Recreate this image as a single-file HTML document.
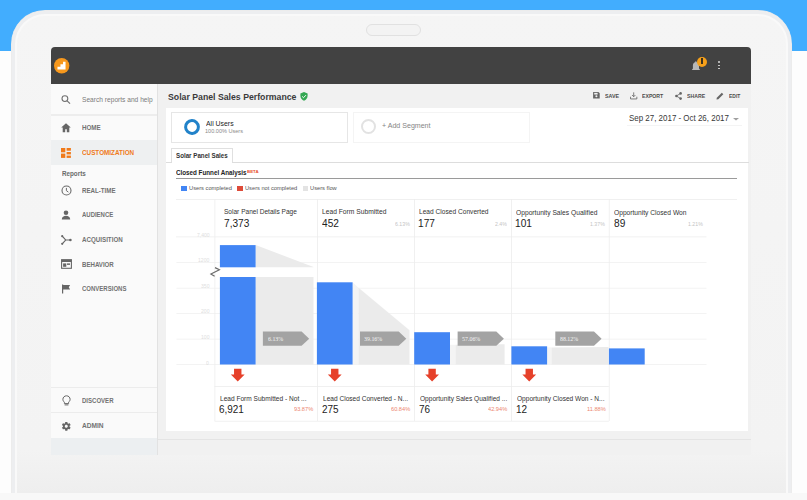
<!DOCTYPE html>
<html><head><meta charset="utf-8">
<style>
*{margin:0;padding:0;box-sizing:border-box}
html,body{width:807px;height:500px;overflow:hidden;background:#fdfdfd;font-family:"Liberation Sans",sans-serif}
.a{position:absolute;white-space:nowrap;line-height:1}
svg{position:absolute;overflow:visible}
</style></head><body>

<div class="a" style="left:0px;top:0px;width:807px;height:51.3px;background:#42adfe;"></div>
<div class="a" style="left:11px;top:10px;width:780.5px;height:500px;border-radius:34px 34px 0 0;background:linear-gradient(#f5f5f5 0%,#f3f3f3 88%,#eeeeee 96.6%);border:1px solid #ececec;border-bottom:none;box-shadow:inset 0 0 0 3px #edeef0,inset 0 0 0 5px #f9f9f9"></div>
<div class="a" style="left:366px;top:24px;width:55px;height:12px;border-radius:6px;border:1px solid #e1e1e1;background:#f3f3f3"></div>
<div class="a" style="left:51px;top:47px;width:700px;height:408px;background:#f1f1f1;border-radius:4px 4px 0 0"></div>
<div class="a" style="left:51px;top:47px;width:700px;height:36.5px;background:#424242;border-radius:4px 4px 0 0"></div>
<svg style="left:53.9px;top:58px" width="15.4" height="15.4" viewBox="0 0 16 16">
  <circle cx="8" cy="8" r="8" fill="#f7981d"/>
  <path d="M3.6 12h8.4V4h-2.6v2.6H6.7v2.6H3.6z" fill="#fff"/></svg>
<svg style="left:691px;top:59.5px" width="11" height="11" viewBox="0 0 11 11">
  <path d="M.8 10h8.4L8 8.6V5.4c0-1.9-1.1-3.2-2.7-3.5V1H4.5v.9C2.9 2.2 1.9 3.5 1.9 5.4v3.2z" fill="#b8b8b8"/></svg>
<div class="a" style="left:696.7px;top:56.5px;width:10px;height:10px;border-radius:5px;background:#f6a01a"></div>
<div class="a" style="left:701px;top:58.3px;width:1.6px;height:5.6px;background:#3d3220"></div>
<div class="a" style="left:718px;top:61.2px;width:1.7px;height:1.7px;border-radius:1px;background:#d8d8d8"></div>
<div class="a" style="left:718px;top:64.6px;width:1.7px;height:1.7px;border-radius:1px;background:#d8d8d8"></div>
<div class="a" style="left:718px;top:67.8px;width:1.7px;height:1.7px;border-radius:1px;background:#d8d8d8"></div>
<div class="a" style="left:51px;top:83.5px;width:105.5px;height:371.5px;background:#fafafa;"></div>
<div class="a" style="left:156.5px;top:83.5px;width:1px;height:371.5px;background:#e2e2e2;"></div>
<svg style="left:60.5px;top:94.6px" width="10" height="9" viewBox="0 0 10 9">
  <circle cx="3.9" cy="3.6" r="2.9" fill="none" stroke="#707070" stroke-width="1.1"/>
  <path d="M5.9 5.6L9 8.6" stroke="#707070" stroke-width="1.2"/></svg>
<div class="a tx" id="t_search" style="left:81.90px;top:95.97px;font-size:7.70px;color:#7a7a7a;font-weight:normal;font-family:'Liberation Sans',sans-serif;transform:scaleX(0.861);transform-origin:0 0;">Search reports and help</div>
<div class="a" style="left:51px;top:114px;width:105.5px;height:1.5px;background:#ededed;"></div>
<svg style="left:60.9px;top:123px" width="10" height="9.5" viewBox="0 0 10 9.5">
  <path d="M5 .3L.2 4.5h1.5v4.8h2.5V6.2h1.6v3.1h2.5V4.5h1.5z" fill="#666"/></svg>
<div class="a tx" id="t_home" style="left:82.16px;top:123.98px;font-size:6.98px;color:#727272;font-weight:bold;font-family:'Liberation Sans',sans-serif;transform:scaleX(0.895);transform-origin:0 0;">HOME</div>
<div class="a" style="left:51px;top:139.5px;width:105.5px;height:25px;background:#eef0f1;"></div>
<svg style="left:61px;top:147.5px" width="10" height="10" viewBox="0 0 10 10">
  <rect x="0" y="0" width="4.3" height="4.3" fill="#f07a1a"/>
  <rect x="5.6" y="0" width="4.3" height="2.7" fill="#f07a1a"/>
  <rect x="0" y="5.6" width="4.3" height="4.3" fill="#f07a1a"/>
  <rect x="5.6" y="4" width="4.3" height="2.4" fill="#f07a1a"/>
  <rect x="5.6" y="7.6" width="4.3" height="2.3" fill="#f07a1a"/></svg>
<div class="a tx" id="t_cust" style="left:81.65px;top:148.96px;font-size:6.98px;color:#f07a1a;font-weight:bold;font-family:'Liberation Sans',sans-serif;transform:scaleX(0.909);transform-origin:0 0;">CUSTOMIZATION</div>
<div class="a tx" id="t_reports" style="left:62.17px;top:171.00px;font-size:7.12px;color:#6a6a6a;font-weight:bold;font-family:'Liberation Sans',sans-serif;transform:scaleX(0.884);transform-origin:0 0;">Reports</div>
<svg style="left:60.5px;top:184.5px" width="11" height="11" viewBox="0 0 11 11">
  <circle cx="5.5" cy="5.5" r="4.5" fill="none" stroke="#6a6a6a" stroke-width="1.1"/>
  <path d="M5.4 2.9v2.8l2 1.4" fill="none" stroke="#6a6a6a" stroke-width="1"/></svg>
<div class="a tx" id="t_rt" style="left:81.60px;top:187.86px;font-size:7.12px;color:#727272;font-weight:bold;font-family:'Liberation Sans',sans-serif;transform:scaleX(0.868);transform-origin:0 0;">REAL-TIME</div>
<svg style="left:61px;top:210px" width="10" height="10" viewBox="0 0 10 10">
  <circle cx="5" cy="2.7" r="2.3" fill="#666"/>
  <path d="M.8 9.5c0-2.6 2-3.7 4.2-3.7s4.2 1.1 4.2 3.7z" fill="#666"/></svg>
<div class="a tx" id="t_aud" style="left:81.85px;top:212.26px;font-size:7.12px;color:#727272;font-weight:bold;font-family:'Liberation Sans',sans-serif;transform:scaleX(0.841);transform-origin:0 0;">AUDIENCE</div>
<svg style="left:60.5px;top:234.5px" width="11" height="10" viewBox="0 0 11 10">
  <path d="M1.2 1.2l3.6 3.8L1.2 8.8M4.8 5h4.6" fill="none" stroke="#666" stroke-width="1.1"/>
  <circle cx="1.2" cy="1.2" r="1.1" fill="#666"/><circle cx="1.2" cy="8.8" r="1.1" fill="#666"/><circle cx="9.4" cy="5" r="1.3" fill="#666"/></svg>
<div class="a tx" id="t_acq" style="left:81.84px;top:237.06px;font-size:7.12px;color:#727272;font-weight:bold;font-family:'Liberation Sans',sans-serif;transform:scaleX(0.873);transform-origin:0 0;">ACQUISITION</div>
<svg style="left:60.5px;top:259.2px" width="11" height="10" viewBox="0 0 11 10">
  <rect x=".6" y=".7" width="9.8" height="8.6" fill="none" stroke="#666" stroke-width="1.1"/>
  <rect x=".6" y=".7" width="9.8" height="2.3" fill="#666"/>
  <rect x="2.1" y="4.4" width="3.2" height="3.4" fill="#666"/>
  <rect x="6" y="4.4" width="3" height="1.5" fill="#666"/></svg>
<div class="a tx" id="t_beh" style="left:81.60px;top:261.56px;font-size:7.12px;color:#727272;font-weight:bold;font-family:'Liberation Sans',sans-serif;transform:scaleX(0.859);transform-origin:0 0;">BEHAVIOR</div>
<svg style="left:61px;top:283.5px" width="10" height="10" viewBox="0 0 10 10">
  <path d="M1 .4h1.2v9.2H1zM2.2 .9h6.9L7.8 3.2l1.3 2.4H2.2z" fill="#666"/></svg>
<div class="a tx" id="t_conv" style="left:81.76px;top:285.96px;font-size:7.12px;color:#727272;font-weight:bold;font-family:'Liberation Sans',sans-serif;transform:scaleX(0.845);transform-origin:0 0;">CONVERSIONS</div>
<div class="a" style="left:51px;top:387px;width:105.5px;height:1.2px;background:#ececec;"></div>
<svg style="left:61.5px;top:394.5px" width="9" height="11" viewBox="0 0 9 11">
  <path d="M4.5 .8C2.4.8.9 2.4.9 4.3c0 1.3.7 2.2 1.5 2.9V8.6h4.2V7.2c.8-.7 1.5-1.6 1.5-2.9C8.1 2.4 6.6.8 4.5.8z" fill="none" stroke="#666" stroke-width="1"/>
  <path d="M2.6 9.9h3.8" stroke="#666" stroke-width="1"/></svg>
<div class="a tx" id="t_disc" style="left:81.61px;top:397.48px;font-size:6.98px;color:#727272;font-weight:bold;font-family:'Liberation Sans',sans-serif;transform:scaleX(0.865);transform-origin:0 0;">DISCOVER</div>
<div class="a" style="left:51px;top:412px;width:105.5px;height:1.2px;background:#ececec;"></div>
<svg style="left:60.6px;top:420.6px" width="10.6" height="10.6" viewBox="0 0 24 24">
  <path fill="#666" d="M19.4 13c.04-.3.06-.64.06-1s-.02-.7-.07-1l2.1-1.65c.2-.15.24-.42.12-.64l-2-3.460c-.12-.22-.39-.3-.61-.22l-2.49 1c-.52-.4-1.08-.73-1.690-.98l-.38-2.65C14.46 2.18 14.25 2 14 2h-4c-.25 0-.46.18-.49.42l-.38 2.65c-.61.25-1.17.59-1.69.98l-2.49-1c-.23-.09-.49 0-.61.22l-2 3.46c-.13.22-.07.49.12.64L4.57 11c-.04.3-.07.65-.07 1s.02.7.07 1l-2.11 1.65c-.19.15-.24.42-.12.64l2 3.46c.12.22.39.3.61.22l2.49-1c.52.4 1.08.73 1.69.98l.38 2.65c.03.24.24.42.49.42h4c.25 0 .46-.18.49-.42l.38-2.65c.61-.25 1.17-.59 1.69-.98l2.49 1c.23.09.49 0 .61-.22l2-3.46c.12-.22.07-.49-.12-.64L19.4 13zM12 15.5c-1.93 0-3.5-1.57-3.5-3.5s1.57-3.5 3.5-3.5 3.5 1.57 3.5 3.5-1.57 3.5-3.5 3.5z"/></svg>
<div class="a tx" id="t_admin" style="left:81.84px;top:422.51px;font-size:6.83px;color:#727272;font-weight:bold;font-family:'Liberation Sans',sans-serif;transform:scaleX(0.965);transform-origin:0 0;">ADMIN</div>
<div class="a" style="left:51px;top:437.6px;width:105.5px;height:17.4px;background:#eceff1;"></div>
<div class="a tx" id="t_title" style="left:167.64px;top:91.64px;font-size:9.74px;color:#3a3a3a;font-weight:bold;font-family:'Liberation Sans',sans-serif;transform:scaleX(0.896);transform-origin:0 0;">Solar Panel Sales Performance</div>
<svg style="left:299.6px;top:91.9px" width="8" height="8.8" viewBox="0 0 9 10">
  <path d="M4.5 0L.4 1.7v2.6c0 2.6 1.7 4.9 4.1 5.6 2.4-.7 4.1-3 4.1-5.6V1.7z" fill="#34a853"/>
  <path d="M2.4 5l1.5 1.5 2.8-2.9" fill="none" stroke="#fff" stroke-width="1.1"/></svg>
<svg style="left:592.8px;top:92.2px" width="6.8" height="6.6" viewBox="0 0 7 7">
  <path d="M0 0h5.6L7 1.4V7H0z" fill="#666"/><rect x="1.2" y=".9" width="3.6" height="1.8" fill="#f1f1f1"/><circle cx="3.5" cy="4.6" r="1.1" fill="#f1f1f1"/></svg>
<div class="a tx" id="t_save" style="left:604.64px;top:93.57px;font-size:5.81px;color:#4c4c4c;font-weight:bold;font-family:'Liberation Sans',sans-serif;transform:scaleX(0.920);transform-origin:0 0;">SAVE</div>
<svg style="left:629.8px;top:91.9px" width="7.4" height="7.6" viewBox="0 0 8 8">
  <path d="M4 .3v4.6M2.2 3.2L4 5l1.8-1.8M.6 5v2.4h6.8V5" fill="none" stroke="#666" stroke-width=".9"/></svg>
<div class="a tx" id="t_export" style="left:641.66px;top:93.57px;font-size:5.81px;color:#4c4c4c;font-weight:bold;font-family:'Liberation Sans',sans-serif;transform:scaleX(0.891);transform-origin:0 0;">EXPORT</div>
<svg style="left:675.3px;top:92.2px" width="7" height="8" viewBox="0 0 7 8">
  <path d="M5.6 1.4L1.4 4l4.2 2.6" fill="none" stroke="#666" stroke-width=".8"/>
  <circle cx="5.6" cy="1.4" r="1.3" fill="#666"/><circle cx="1.4" cy="4" r="1.3" fill="#666"/><circle cx="5.6" cy="6.6" r="1.3" fill="#666"/></svg>
<div class="a tx" id="t_share" style="left:687.04px;top:93.57px;font-size:5.81px;color:#4c4c4c;font-weight:bold;font-family:'Liberation Sans',sans-serif;transform:scaleX(0.891);transform-origin:0 0;">SHARE</div>
<svg style="left:716.3px;top:92.2px" width="8" height="8" viewBox="0 0 8 8">
  <path d="M.5 7.5l.3-1.8L5.8.7l1.5 1.5-5 5z" fill="#666"/></svg>
<div class="a tx" id="t_edit" style="left:729.10px;top:93.57px;font-size:5.81px;color:#4c4c4c;font-weight:bold;font-family:'Liberation Sans',sans-serif;transform:scaleX(0.860);transform-origin:0 0;">EDIT</div>
<div class="a" style="left:166.4px;top:107.5px;width:581.2px;height:323px;background:#fff;"></div>
<div class="a" style="left:171px;top:111.5px;width:176.5px;height:31.2px;border:1px solid #e6e6e6"></div>
<svg style="left:184.1px;top:118.7px" width="16" height="16" viewBox="0 0 16 16">
  <circle cx="8" cy="8" r="6.4" fill="none" stroke="#2182c9" stroke-width="3" stroke-dasharray="39.6 0.6" transform="rotate(-92 8 8)"/></svg>
<div class="a tx" id="t_all" style="left:205.70px;top:119.87px;font-size:7.70px;color:#222;font-weight:normal;font-family:'Liberation Sans',sans-serif;transform:scaleX(0.897);transform-origin:0 0;">All Users</div>
<div class="a tx" id="t_100" style="left:205.28px;top:129.47px;font-size:5.81px;color:#8a8a8a;font-weight:normal;font-family:'Liberation Sans',sans-serif;transform:scaleX(0.957);transform-origin:0 0;">100.00% Users</div>
<div class="a" style="left:353px;top:111.5px;width:176.5px;height:31.3px;border:1px solid #f4f4f4"></div>
<svg style="left:361px;top:119px" width="15" height="15" viewBox="0 0 15 15">
  <circle cx="7.5" cy="7.5" r="6.5" fill="none" stroke="#e2e2e2" stroke-width="2"/></svg>
<div class="a tx" id="t_add" style="left:382.25px;top:122.24px;font-size:6.98px;color:#858585;font-weight:normal;font-family:'Liberation Sans',sans-serif;transform:scaleX(1.014);transform-origin:0 0;">+ Add Segment</div>
<div class="a tx" id="t_date" style="left:628.57px;top:114.45px;font-size:8.43px;color:#383838;font-weight:normal;font-family:'Liberation Sans',sans-serif;transform:scaleX(0.944);transform-origin:0 0;">Sep 27, 2017 - Oct 26, 2017</div>
<svg style="left:732.8px;top:117.6px" width="6" height="3" viewBox="0 0 6 3"><path d="M0 0h6L3 2.6z" fill="#a0a0a0"/></svg>
<div class="a" style="left:627px;top:124.5px;width:115px;height:1px;background:#f4f4f4;"></div>
<div class="a" style="left:171px;top:148.4px;width:61.5px;height:14px;border:1px solid #e0e0e0;border-bottom:none;background:#fff"></div>
<div class="a tx" id="t_tab" style="left:175.91px;top:152.96px;font-size:7.12px;color:#333;font-weight:bold;font-family:'Liberation Sans',sans-serif;transform:scaleX(0.873);transform-origin:0 0;">Solar Panel Sales</div>
<div class="a" style="left:166.4px;top:161.9px;width:583px;height:1px;background:#dddddd;"></div>
<div class="a" style="left:172px;top:161.9px;width:59.5px;height:1px;background:#fff;"></div>
<div class="a tx" id="t_cfa" style="left:175.85px;top:169.24px;font-size:7.27px;color:#222;font-weight:bold;font-family:'Liberation Sans',sans-serif;transform:scaleX(0.862);transform-origin:0 0;">Closed Funnel Analysis</div>
<div class="a tx" id="t_beta" style="left:247.02px;top:169.73px;font-size:4.22px;color:#e8502d;font-weight:bold;font-family:'Liberation Sans',sans-serif;transform:scaleX(1.040);transform-origin:0 0;">BETA</div>
<div class="a" style="left:176px;top:178px;width:561.2px;height:1px;background:#9a9a9a;"></div>
<div class="a" style="left:181px;top:185.9px;width:5.7px;height:5.3px;background:#4285f4;"></div>
<div class="a tx" id="lg1" style="left:189.27px;top:184.83px;font-size:6.25px;color:#555;font-weight:normal;font-family:'Liberation Sans',sans-serif;transform:scaleX(0.915);transform-origin:0 0;">Users completed</div>
<div class="a" style="left:237.1px;top:185.9px;width:5.7px;height:5.3px;background:#dd4b39;"></div>
<div class="a tx" id="lg2" style="left:244.87px;top:184.84px;font-size:6.25px;color:#555;font-weight:normal;font-family:'Liberation Sans',sans-serif;transform:scaleX(0.911);transform-origin:0 0;">Users not completed</div>
<div class="a" style="left:302.5px;top:185.9px;width:5.7px;height:5.3px;background:#e3e3e3;"></div>
<div class="a tx" id="lg3" style="left:309.87px;top:184.90px;font-size:6.25px;color:#555;font-weight:normal;font-family:'Liberation Sans',sans-serif;transform:scaleX(0.916);transform-origin:0 0;">Users flow</div>
<svg style="left:0;top:0" width="807" height="500" viewBox="0 0 807 500">
<rect x="176" y="199" width="561" height="0.8" fill="#ededed"/>
<rect x="176" y="236.5" width="530.5" height="0.8" fill="#ededed"/>
<rect x="176.4" y="262" width="530.1" height="0.8" fill="#f0f0f0"/>
<rect x="176.4" y="287.8" width="530.1" height="0.8" fill="#f0f0f0"/>
<rect x="176.4" y="313" width="530.1" height="0.8" fill="#f0f0f0"/>
<rect x="176.4" y="338.7" width="530.1" height="0.8" fill="#f0f0f0"/>
<rect x="176.4" y="364.2" width="530.1" height="0.8" fill="#f0f0f0"/>
<rect x="214.5" y="199" width="0.8" height="222" fill="#ededed"/>
<rect x="317.2" y="199" width="0.8" height="222" fill="#ededed"/>
<rect x="414.2" y="199" width="0.8" height="222" fill="#ededed"/>
<rect x="511.1" y="199" width="0.8" height="222" fill="#ededed"/>
<rect x="608.8" y="199" width="0.8" height="222" fill="#ededed"/>
<path d="M255.6 245.1L313.5 266.9V267.3H255.6z" fill="#ebebeb"/>
<rect x="255.6" y="277" width="57.9" height="87.5" fill="#ebebeb"/>
<path d="M352.6 282.3L358.5 287.7V364.5H352.6z" fill="#f4f4f4"/>
<rect x="450" y="344.8" width="5.5" height="19.7" fill="#f4f4f4"/>
<rect x="547.1" y="347.4" width="4.4" height="17.1" fill="#f4f4f4"/>
<path d="M358.5 287.7L409.5 330.3V364.5H358.5z" fill="#ebebeb"/>
<path d="M455.5 344.8L504.6 344.2V364.5H455.5z" fill="#ebebeb"/>
<path d="M551.5 347.4L608.5 347V364.5H551.5z" fill="#ebebeb"/>
<rect x="219.9" y="245.1" width="35.7" height="22.2" fill="#4285f4"/>
<rect x="219.9" y="277" width="35.7" height="87.5" fill="#4285f4"/>
<rect x="316.9" y="282.3" width="35.7" height="82.2" fill="#4285f4"/>
<rect x="414.2" y="332.2" width="35.8" height="32.3" fill="#4285f4"/>
<rect x="511.4" y="346.3" width="35.7" height="18.2" fill="#4285f4"/>
<rect x="608.9" y="348.4" width="35.8" height="16.1" fill="#4285f4"/>
<path d="M215 267.6L219.4 269.8L210.9 274L214.6 276.3" fill="none" stroke="#6a6a6a" stroke-width="1.2"/>
<path d="M262.9 331.5h38.7l7.6 7.2l-7.6 7.1H262.9z" fill="#a3a3a3"/>
<path d="M360 331.5h38.7l7.6 7.2l-7.6 7.1H360z" fill="#a3a3a3"/>
<path d="M457.6 331.5h38.7l7.6 7.2l-7.6 7.1H457.6z" fill="#a3a3a3"/>
<path d="M555.3 331.5h38.7l7.6 7.2l-7.6 7.1H555.3z" fill="#a3a3a3"/>
<path d="M234.05 368.8h7.4v5.8h3.2L237.75 381.4L230.85 374.6h3.2z" fill="#e6412a"/>
<path d="M331.05 368.8h7.4v5.8h3.2L334.75 381.4L327.85 374.6h3.2z" fill="#e6412a"/>
<path d="M428.40 368.8h7.4v5.8h3.2L432.10 381.4L425.20 374.6h3.2z" fill="#e6412a"/>
<path d="M525.55 368.8h7.4v5.8h3.2L529.25 381.4L522.35 374.6h3.2z" fill="#e6412a"/>
<rect x="214.5" y="386" width="394.3" height="0.8" fill="#ededed"/>
<rect x="214.5" y="420.8" width="394.3" height="0.8" fill="#ededed"/>
</svg>
<div class="a tx" id="tx27" style="left:197.16px;top:232.65px;font-size:5.96px;color:#dedede;font-weight:normal;font-family:'Liberation Sans',sans-serif;transform:scaleX(0.850);transform-origin:0 0;">7,400</div>
<div class="a tx" id="tx28" style="left:197.71px;top:257.75px;font-size:5.96px;color:#dedede;font-weight:normal;font-family:'Liberation Sans',sans-serif;transform:scaleX(0.850);transform-origin:0 0;">1200</div>
<div class="a tx" id="tx29" style="left:200.54px;top:283.55px;font-size:5.96px;color:#dedede;font-weight:normal;font-family:'Liberation Sans',sans-serif;transform:scaleX(0.850);transform-origin:0 0;">350</div>
<div class="a tx" id="tx30" style="left:200.54px;top:308.75px;font-size:5.96px;color:#dedede;font-weight:normal;font-family:'Liberation Sans',sans-serif;transform:scaleX(0.850);transform-origin:0 0;">200</div>
<div class="a tx" id="tx31" style="left:200.54px;top:335.05px;font-size:5.96px;color:#dedede;font-weight:normal;font-family:'Liberation Sans',sans-serif;transform:scaleX(0.850);transform-origin:0 0;">100</div>
<div class="a tx" id="tx32" style="left:206.17px;top:361.39px;font-size:5.96px;color:#dedede;font-weight:normal;font-family:'Liberation Sans',sans-serif;transform:scaleX(0.850);transform-origin:0 0;">0</div>
<div class="a tx" id="h0" style="left:223.90px;top:208.18px;font-size:6.98px;color:#333;font-weight:normal;font-family:'Liberation Sans',sans-serif;transform:scaleX(0.941);transform-origin:0 0;">Solar Panel Details Page</div>
<div class="a tx" id="v0" style="left:224.29px;top:218.08px;font-size:10.76px;color:#222;font-weight:normal;font-family:'Liberation Sans',sans-serif;transform:scaleX(0.941);transform-origin:0 0;">7,373</div>
<div class="a tx" id="h1" style="left:321.86px;top:208.18px;font-size:6.98px;color:#333;font-weight:normal;font-family:'Liberation Sans',sans-serif;transform:scaleX(0.961);transform-origin:0 0;">Lead Form Submitted</div>
<div class="a tx" id="v1" style="left:322.20px;top:218.08px;font-size:10.76px;color:#222;font-weight:normal;font-family:'Liberation Sans',sans-serif;transform:scaleX(0.941);transform-origin:0 0;">452</div>
<div class="a tx" id="p1" style="left:394.80px;top:222.29px;font-size:5.67px;color:#c4c4c4;font-weight:normal;font-family:'Liberation Sans',sans-serif;transform:scaleX(0.920);transform-origin:0 0;">6.13%</div>
<div class="a tx" id="h2" style="left:418.87px;top:208.18px;font-size:6.98px;color:#333;font-weight:normal;font-family:'Liberation Sans',sans-serif;transform:scaleX(0.949);transform-origin:0 0;">Lead Closed Converted</div>
<div class="a tx" id="v2" style="left:417.94px;top:218.08px;font-size:10.76px;color:#222;font-weight:normal;font-family:'Liberation Sans',sans-serif;transform:scaleX(0.941);transform-origin:0 0;">177</div>
<div class="a tx" id="p2" style="left:494.59px;top:222.29px;font-size:5.67px;color:#c4c4c4;font-weight:normal;font-family:'Liberation Sans',sans-serif;transform:scaleX(0.920);transform-origin:0 0;">2.4%</div>
<div class="a tx" id="h3" style="left:516.00px;top:208.92px;font-size:6.98px;color:#333;font-weight:normal;font-family:'Liberation Sans',sans-serif;transform:scaleX(0.959);transform-origin:0 0;">Opportunity Sales Qualified</div>
<div class="a tx" id="v3" style="left:514.72px;top:218.08px;font-size:10.76px;color:#222;font-weight:normal;font-family:'Liberation Sans',sans-serif;transform:scaleX(0.941);transform-origin:0 0;">101</div>
<div class="a tx" id="p3" style="left:590.00px;top:222.29px;font-size:5.67px;color:#c4c4c4;font-weight:normal;font-family:'Liberation Sans',sans-serif;transform:scaleX(0.920);transform-origin:0 0;">1.37%</div>
<div class="a tx" id="h4" style="left:613.70px;top:208.92px;font-size:6.98px;color:#333;font-weight:normal;font-family:'Liberation Sans',sans-serif;transform:scaleX(0.956);transform-origin:0 0;">Opportunity Closed Won</div>
<div class="a tx" id="v4" style="left:613.54px;top:218.08px;font-size:10.76px;color:#222;font-weight:normal;font-family:'Liberation Sans',sans-serif;transform:scaleX(0.941);transform-origin:0 0;">89</div>
<div class="a tx" id="p4" style="left:687.99px;top:222.29px;font-size:5.67px;color:#c4c4c4;font-weight:normal;font-family:'Liberation Sans',sans-serif;transform:scaleX(0.920);transform-origin:0 0;">1.21%</div>
<div class="a tx" id="tx47" style="left:267.76px;top:335.55px;font-size:6.41px;color:#f4f4f4;font-weight:normal;font-family:'Liberation Serif',serif;transform:scaleX(0.920);transform-origin:0 0;">6.13%</div>
<div class="a tx" id="tx48" style="left:363.92px;top:335.55px;font-size:6.41px;color:#f4f4f4;font-weight:normal;font-family:'Liberation Serif',serif;transform:scaleX(0.922);transform-origin:0 0;">39.16%</div>
<div class="a tx" id="tx49" style="left:462.34px;top:335.55px;font-size:6.41px;color:#f4f4f4;font-weight:normal;font-family:'Liberation Serif',serif;transform:scaleX(0.926);transform-origin:0 0;">57.06%</div>
<div class="a tx" id="tx50" style="left:560.16px;top:335.55px;font-size:6.41px;color:#f4f4f4;font-weight:normal;font-family:'Liberation Serif',serif;transform:scaleX(0.920);transform-origin:0 0;">88.12%</div>
<div class="a tx" id="b0" style="left:219.87px;top:396.20px;font-size:6.83px;color:#333;font-weight:normal;font-family:'Liberation Sans',sans-serif;transform:scaleX(0.962);transform-origin:0 0;">Lead Form Submitted - Not ...</div>
<div class="a tx" id="bv0" style="left:219.19px;top:403.83px;font-size:10.76px;color:#222;font-weight:normal;font-family:'Liberation Sans',sans-serif;transform:scaleX(0.924);transform-origin:0 0;">6,921</div>
<div class="a tx" id="bp0" style="left:293.98px;top:407.35px;font-size:5.96px;color:#ec8670;font-weight:normal;font-family:'Liberation Sans',sans-serif;transform:scaleX(0.950);transform-origin:0 0;">93.87%</div>
<div class="a tx" id="b1" style="left:322.57px;top:396.11px;font-size:6.83px;color:#333;font-weight:normal;font-family:'Liberation Sans',sans-serif;transform:scaleX(0.962);transform-origin:0 0;">Lead Closed Converted - N...</div>
<div class="a tx" id="bv1" style="left:321.70px;top:403.86px;font-size:10.76px;color:#222;font-weight:normal;font-family:'Liberation Sans',sans-serif;transform:scaleX(0.924);transform-origin:0 0;">275</div>
<div class="a tx" id="bp1" style="left:390.98px;top:407.35px;font-size:5.96px;color:#ec8670;font-weight:normal;font-family:'Liberation Sans',sans-serif;transform:scaleX(0.950);transform-origin:0 0;">60.84%</div>
<div class="a tx" id="b2" style="left:419.80px;top:396.15px;font-size:6.83px;color:#333;font-weight:normal;font-family:'Liberation Sans',sans-serif;transform:scaleX(0.962);transform-origin:0 0;">Opportunity Sales Qualified ...</div>
<div class="a tx" id="bv2" style="left:418.65px;top:403.88px;font-size:10.76px;color:#222;font-weight:normal;font-family:'Liberation Sans',sans-serif;transform:scaleX(0.924);transform-origin:0 0;">76</div>
<div class="a tx" id="bp2" style="left:487.88px;top:407.35px;font-size:5.96px;color:#ec8670;font-weight:normal;font-family:'Liberation Sans',sans-serif;transform:scaleX(0.950);transform-origin:0 0;">42.94%</div>
<div class="a tx" id="b3" style="left:516.70px;top:396.18px;font-size:6.83px;color:#333;font-weight:normal;font-family:'Liberation Sans',sans-serif;transform:scaleX(0.962);transform-origin:0 0;">Opportunity Closed Won - N...</div>
<div class="a tx" id="bv3" style="left:516.25px;top:403.85px;font-size:10.76px;color:#222;font-weight:normal;font-family:'Liberation Sans',sans-serif;transform:scaleX(0.924);transform-origin:0 0;">12</div>
<div class="a tx" id="bp3" style="left:586.80px;top:407.35px;font-size:5.96px;color:#ec8670;font-weight:normal;font-family:'Liberation Sans',sans-serif;transform:scaleX(0.950);transform-origin:0 0;">11.88%</div>
<div class="a" style="left:0px;top:493px;width:807px;height:7px;background:#f8f8f8;"></div>
<div class="a" style="left:157.5px;top:439px;width:593.5px;height:0.8px;background:#e4e4e4;"></div>
</body></html>
